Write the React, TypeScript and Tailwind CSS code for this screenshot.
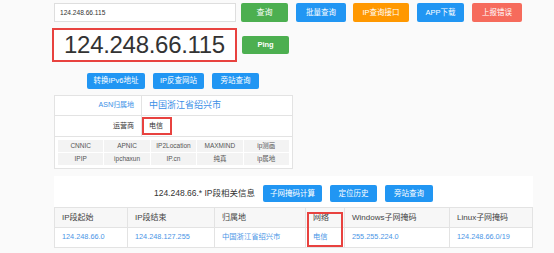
const Btn = ({ label, className }: { label: string; className: string }) => (
  <div
    className={`flex items-center justify-center rounded-[2px] text-white text-[7.5px] leading-none ${className}`}
  >
    {label}
  </div>
);

const sources = [
  "CNNIC",
  "APNIC",
  "IP2Location",
  "MAXMIND",
  "ip测画",
  "IPIP",
  "ipchaxun",
  "IP.cn",
  "纯真",
  "ip属地",
];

const heads = ["IP段起始", "IP段结束", "归属地", "网络", "Windows子网掩码", "Linux子网掩码"];
const cells = ["124.248.66.0", "124.248.127.255", "中国浙江省绍兴市", "电信", "255.255.224.0", "124.248.66.0/19"];

export default function App() {
  return (
    <div className="w-[554px] h-[253px] overflow-hidden bg-[#fafafa] text-[#333] font-['Liberation_Sans','Noto_Sans_CJK_SC',sans-serif]">
      {/* search row */}
      <div className="flex items-center pt-[3px] pl-[54px]">
        <div className="w-[182px] h-[19px] border border-[#dedede] bg-white pl-[5px] flex items-center text-[6.6px] text-[#333]">
          124.248.66.115
        </div>
        <Btn label="查询" className="ml-[5px] w-[47px] h-[19px] bg-[#4caf50] text-[8px]" />
        <Btn label="批量查询" className="ml-[8px] w-[50px] h-[19px] bg-[#2196f3]" />
        <Btn label="IP查询接口" className="ml-[7px] w-[56px] h-[19px] bg-[#ff9800]" />
        <Btn label="APP下载" className="ml-[8px] w-[47px] h-[19px] bg-[#2196f3]" />
        <Btn label="上报错误" className="ml-[8px] w-[50px] h-[19px] bg-[#f66b5c]" />
      </div>

      {/* big ip */}
      <div className="flex items-center mt-[6px] pl-[52px]">
        <div className="w-[185px] h-[34px] border-2 border-[#e8423f] bg-white flex items-center justify-center text-[24px] tracking-[-0.3px] text-[#333] leading-none">
          124.248.66.115
        </div>
        <Btn label="Ping" className="ml-[5px] w-[47px] h-[18px] bg-[#4caf50] text-[6.5px] font-bold" />
      </div>

      {/* tools row */}
      <div className="flex gap-[8px] mt-[11px] pl-[87px]">
        <Btn label="转换IPv6地址" className="w-[58px] h-[16px] bg-[#2196f3] text-[6.5px]" />
        <Btn label="IP反查网站" className="w-[51px] h-[16px] bg-[#2196f3] text-[6.5px]" />
        <Btn label="旁站查询" className="w-[47px] h-[16px] bg-[#2196f3] text-[6.5px]" />
      </div>

      {/* info table */}
      <div className="mt-[6px] ml-[54px] w-[239px] border border-[#e3e3e3] bg-white">
        <div className="flex h-[20px] border-b border-[#e3e3e3]">
          <div className="w-[87px] border-r border-[#e3e3e3] flex items-center justify-end pr-[7px] text-[7px] text-[#3a8ee6]">
            ASN归属地
          </div>
          <div className="flex items-center pl-[7px] text-[9px] text-[#3a8ee6]">中国浙江省绍兴市</div>
        </div>
        <div className="flex h-[21px] border-b border-[#e3e3e3]">
          <div className="w-[87px] border-r border-[#e3e3e3] flex items-center justify-end pr-[7px] text-[7px] text-[#333]">
            运营商
          </div>
          <div className="flex items-center">
            <div className="w-[30px] h-[18px] border-2 border-[#e8423f] flex items-center pl-[5px] text-[7px] text-[#333]">
              电信
            </div>
          </div>
        </div>
        <div className="grid grid-cols-5 gap-[1px] p-[3px]">
          {sources.map((s) => (
            <div
              key={s}
              className="h-[12px] bg-[#f3f3f3] flex items-center justify-center text-[6.5px] text-[#555]"
            >
              {s}
            </div>
          ))}
        </div>
      </div>

      {/* segment panel */}
      <div className="mt-[7px] ml-[54px] w-[479px] bg-white">
        <div className="flex items-center justify-center gap-[8px] pt-[9px]">
          <span className="text-[8.5px] text-[#333]">124.248.66.* IP段相关信息</span>
          <Btn label="子网掩码计算" className="w-[59px] h-[17px] bg-[#2196f3] text-[6.8px]" />
          <Btn label="定位历史" className="w-[47px] h-[17px] bg-[#2196f3] text-[6.8px]" />
          <Btn label="旁站查询" className="w-[48px] h-[17px] bg-[#2196f3] text-[6.8px]" />
        </div>
        <div className="relative mt-[5px] border border-[#e3e3e3] grid grid-cols-[73px_87px_91px_39px_105px_82px]">
          {heads.map((h, i) => (
            <div
              key={h}
              className={`h-[20px] bg-[#f7f7f7] border-b border-[#e3e3e3] flex items-center pl-[7px] text-[8px] text-[#444] ${i < 5 ? "border-r" : ""}`}
            >
              {h}
            </div>
          ))}
          {cells.map((c, i) => (
            <div
              key={c}
              className={`h-[19px] flex items-center pl-[7px] text-[7.3px] text-[#4a95e6] border-[#e3e3e3] ${i < 5 ? "border-r" : ""}`}
            >
              {c}
            </div>
          ))}
          <div className="absolute left-[252px] top-[4px] w-[36px] h-[35px] border-2 border-[#e8423f]" />
        </div>
      </div>
    </div>
  );
}
